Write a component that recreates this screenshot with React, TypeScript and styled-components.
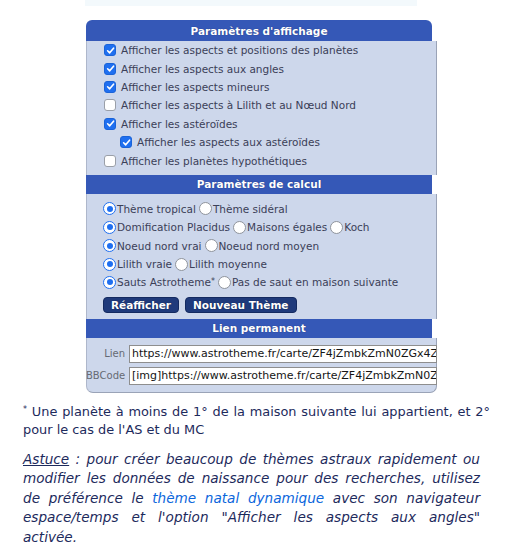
import React from "react";
import styled, { createGlobalStyle, css } from "styled-components";

const Global = createGlobalStyle`
  html, body { margin: 0; padding: 0; background: #ffffff; }
  body { font-family: "DejaVu Sans", Verdana, sans-serif; }
`;

const Page = styled.div`
  width: 507px;
  height: 560px;
  overflow: hidden;
  display: flex;
  flex-direction: column;
`;

const TopStrip = styled.div`
  margin-left: 85px;
  width: 332px;
  height: 6px;
  background: #f3f9fc;
`;

const Panel = styled.div`
  margin: 14px 0 0 86px;
  width: 351px;
  display: flex;
  flex-direction: column;
`;

const Header = styled.div<{ $first?: boolean }>`
  width: 346px;
  height: 19px;
  box-sizing: border-box;
  background: #3558b7;
  color: #ffffff;
  font-weight: bold;
  font-size: 10.5px;
  display: flex;
  align-items: center;
  justify-content: center;
  text-shadow: 0 0 1px #1b2f70;
  ${(p) =>
    p.$first &&
    css`
      height: 21px;
      border-radius: 6px 6px 0 0;
    `}
`;

const Body = styled.div<{ $last?: boolean; $pad: string }>`
  background: #cdd7eb;
  border-left: 1px solid #aeb7cb;
  border-right: 1px solid #9aa3b7;
  padding: ${(p) => p.$pad};
  display: flex;
  flex-direction: column;
  ${(p) =>
    p.$last &&
    css`
      border-bottom: 1px solid #9aa3b7;
      border-radius: 0 0 7px 7px;
    `}
`;

const Row = styled.div<{ $indent?: number }>`
  height: 18.4px;
  display: flex;
  align-items: center;
  padding-left: ${(p) => p.$indent ?? 17}px;
  font-size: 10.5px;
  color: #3b4058;
  white-space: nowrap;
`;

const Box = styled.span<{ $on?: boolean }>`
  width: 12px;
  height: 12px;
  box-sizing: border-box;
  border-radius: 3px;
  margin-right: 5px;
  display: inline-flex;
  align-items: center;
  justify-content: center;
  flex: none;
  ${(p) =>
    p.$on
      ? css`
          background: #1f6ff0;
          border: 1px solid #1a63d8;
        `
      : css`
          background: #ffffff;
          border: 1px solid #9a9fa8;
        `}
`;

const Radio = styled.span<{ $on?: boolean }>`
  width: 13px;
  height: 13px;
  box-sizing: border-box;
  border-radius: 50%;
  background: #ffffff;
  margin-right: 1px;
  flex: none;
  display: inline-flex;
  align-items: center;
  justify-content: center;
  ${(p) =>
    p.$on
      ? css`
          border: 1.5px solid #1f6ff0;
          &::after {
            content: "";
            width: 6px;
            height: 6px;
            border-radius: 50%;
            background: #1f6ff0;
          }
        `
      : css`
          border: 1px solid #8f949c;
        `}
`;

const Opt = styled.span`
  display: inline-flex;
  align-items: center;
  margin-right: 3px;
`;

const Sup = styled.sup`
  font-size: 8px;
  line-height: 0;
  vertical-align: 4px;
`;

const ButtonRow = styled.div`
  display: flex;
  gap: 6px;
  padding: 5px 0 0 16px;
`;

const Button = styled.span`
  height: 16px;
  box-sizing: border-box;
  padding: 0 7px;
  background: #1f3a7b;
  border: 1px solid #142a60;
  border-radius: 4px;
  color: #ffffff;
  font-weight: bold;
  font-size: 10.5px;
  display: inline-flex;
  align-items: center;
  text-shadow: 0 0 1px #0b1a44;
`;

const LinkGrid = styled.div`
  display: grid;
  grid-template-columns: 38px 308px;
  column-gap: 4px;
  row-gap: 4px;
  align-items: center;
`;

const Label = styled.span`
  font-size: 10px;
  color: #666a73;
  text-align: right;
  margin-left: -1px;
`;

const Field = styled.div`
  height: 18px;
  box-sizing: border-box;
  border: 1px solid #8e8e8e;
  background: #ffffff;
  font-size: 11px;
  color: #151515;
  padding: 0 0 0 2px;
  display: flex;
  align-items: center;
  overflow: hidden;
  white-space: nowrap;
`;

const Text = styled.div`
  margin: 0 23px;
  color: #1d2a5c;
  text-align: justify;
`;

const Note = styled(Text)`
  margin-top: 10px;
  margin-right: 17px;
  font-size: 12.9px;
  line-height: 18px;
`;

const Tip = styled(Text)`
  margin-top: 11px;
  margin-right: 27px;
  font-size: 13.6px;
  line-height: 19.6px;
  font-style: italic;
`;

const Wide = styled.span`
  word-spacing: 4px;
`;

const Under = styled.span`
  text-decoration: underline;
`;

const A = styled.span`
  color: #0b66dc;
`;

const Check = () => (
  <svg width="9" height="9" viewBox="0 0 10 10">
    <path d="M1.8 5.3 L4.1 7.6 L8.4 2.4" fill="none" stroke="#fff" strokeWidth="1.8" strokeLinecap="round" strokeLinejoin="round" />
  </svg>
);

const checks: [string, boolean, number?][] = [
  ["Afficher les aspects et positions des planètes", true],
  ["Afficher les aspects aux angles", true],
  ["Afficher les aspects mineurs", true],
  ["Afficher les aspects à Lilith et au Nœud Nord", false],
  ["Afficher les astéroïdes", true],
  ["Afficher les aspects aux astéroïdes", true, 33],
  ["Afficher les planètes hypothétiques", false],
];

const radios: [React.ReactNode, boolean][][] = [
  [["Thème tropical", true], ["Thème sidéral", false]],
  [["Domification Placidus", true], ["Maisons égales", false], ["Koch", false]],
  [["Noeud nord vrai", true], ["Noeud nord moyen", false]],
  [["Lilith vraie", true], ["Lilith moyenne", false]],
  [[<>Sauts Astrotheme<Sup>*</Sup></>, true], ["Pas de saut en maison suivante", false]],
];

export default function App() {
  return (
    <Page>
      <Global />
      <TopStrip />
      <Panel>
        <Header $first>Paramètres d'affichage</Header>
        <Body $pad="0 0 5px 0">
          {checks.map(([t, on, ind], i) => (
            <Row key={i} $indent={ind}>
              <Box $on={on}>{on && <Check />}</Box>
              {t}
            </Row>
          ))}
        </Body>
        <Header>Paramètres de calcul</Header>
        <Body $pad="6px 0 6px 0">
          {radios.map((r, i) => (
            <Row key={i} $indent={16}>
              {r.map(([t, on], j) => (
                <Opt key={j}>
                  <Radio $on={on} />
                  {t}
                </Opt>
              ))}
            </Row>
          ))}
          <ButtonRow>
            <Button>Réafficher</Button>
            <Button>Nouveau Thème</Button>
          </ButtonRow>
        </Body>
        <Header>Lien permanent</Header>
        <Body $last $pad="7px 0 7px 0">
          <LinkGrid>
            <Label>Lien</Label>
            <Field>https://www.astrotheme.fr/carte/ZF4jZmbkZmN0ZGx4ZvZmbkZ</Field>
            <Label>BBCode</Label>
            <Field>[img]https://www.astrotheme.fr/carte/ZF4jZmbkZmN0ZGx4Zv</Field>
          </LinkGrid>
        </Body>
      </Panel>
      <Note>
        <Sup>*</Sup> Une planète à moins de 1° de la maison suivante lui appartient, et 2° pour le cas de l'AS et du MC
      </Note>
      <Tip>
        <Under>Astuce</Under> : pour créer beaucoup de thèmes astraux rapidement ou modifier les données de naissance
        pour des recherches, utilisez de préférence le <A>thème natal dynamique</A> avec son navigateur{" "}
        <Wide>espace/temps et l'option "Afficher les aspects aux angles" activée.</Wide>
      </Tip>
    </Page>
  );
}
